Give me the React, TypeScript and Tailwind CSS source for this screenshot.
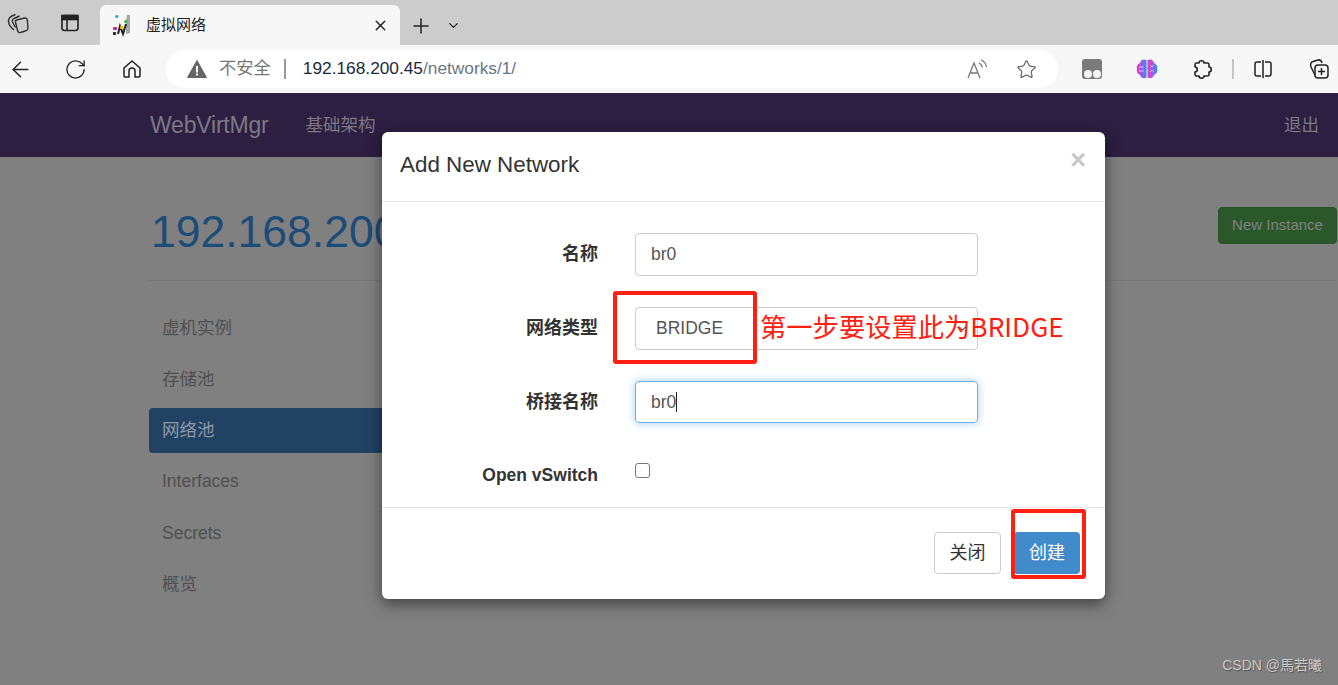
import { ArrowLeft, RotateCw, Star, Plus, X, ChevronDown } from "lucide-react";

const SIDE_ITEMS = [
  { label: "虚机实例", active: false },
  { label: "存储池", active: false },
  { label: "网络池", active: true },
  { label: "Interfaces", active: false },
  { label: "Secrets", active: false },
  { label: "概览", active: false },
];

const FONT = "font-['Liberation_Sans','Noto_Sans_CJK_SC',sans-serif]";

function Favicon() {
  return (
    <svg width="22" height="24" viewBox="0 0 22 24">
      <path d="M15 2 L18 2 L18 20 L14 21 L14 8 Z" fill="#a8a8a8" />
      <rect x="3" y="2" width="3.500" height="3" rx="1.500" fill="#35a7e0" />
      <rect x="12" y="7" width="4" height="3" rx="1.500" fill="#3cc04a" />
      <path d="M6 21 L8 13 L11 21 L14 11" stroke="#222" strokeWidth="2" fill="none" />
      <rect x="1" y="14" width="4" height="3" rx="1" fill="#d0208a" />
      <rect x="8" y="13" width="3.500" height="3" rx="1" fill="#f2c200" />
      <rect x="1" y="19" width="3" height="3" fill="#333" />
    </svg>
  );
}

function BrowserChrome() {
  return (
    <div className="h-[93px] flex flex-col">
      {/* tab strip */}
      <div className="h-[45px] bg-[#cccccc] flex items-end">
        <div className="w-[100px] h-[45px] flex items-center text-[#222]">
          <svg className="ml-[7px]" width="22" height="22" viewBox="0 0 22 22" fill="none" stroke="#333" strokeWidth="1.400">
            <path d="M9.500 8 L17.500 6 C19 5.700 20 6.500 20.300 8 L21 16 C21 17.500 20.300 18.500 19 18.800 L13.500 20.500 C12 21 10.800 20 10.500 18.500 L8.500 10 C8.200 9 8.500 8.300 9.500 8 Z" />
            <path d="M8.500 15.500 L5.500 10 C5 8.500 5.500 7.300 7 6.500 L12.500 4" />
            <path d="M7 18 C3 15 1.500 12 1.500 9 C1.500 6.500 3 5 5 4 L8.500 2.500" />
          </svg>
          <svg className="ml-[31px]" width="20" height="20" viewBox="0 0 20 20" fill="none" stroke="#222" strokeWidth="1.600">
            <rect x="2" y="2.500" width="16" height="15" rx="2.500" />
            <rect x="2" y="2.500" width="16" height="4" fill="#222" />
            <path d="M7 6.500 V17.500" />
          </svg>
        </div>
        <div className="w-[300px] h-[40px] bg-[#f7f7f7] rounded-t-[6px] flex items-center pl-[12px] pr-[11px]">
          <Favicon />
          <span className={`ml-[12px] text-[15px] text-[#222] flex-1 ${FONT}`}>虚拟网络</span>
          <X size={17} strokeWidth={2} className="text-[#222]" />
        </div>
        <div className="h-[45px] flex items-center ml-[9px] pt-[6px]">
          <Plus size={24} strokeWidth={1.5} className="text-[#222]" />
          <ChevronDown size={15} strokeWidth={2} className="ml-[13px] text-[#222]" />
        </div>
      </div>
      {/* toolbar */}
      <div className="h-[48px] bg-[#f7f7f7] flex items-center">
        <ArrowLeft size={25} strokeWidth={1.4} className="ml-[8px] text-[#222]" />
        <RotateCw size={23} strokeWidth={1.4} className="ml-[31px] text-[#222]" />
        <svg className="ml-[34px]" width="22" height="22" viewBox="0 0 22 22" fill="none" stroke="#222" strokeWidth="1.500">
          <path d="M3 10 L11 3 L19 10 V18 a1 1 0 0 1 -1 1 H14 V13 a3 3 0 0 0 -6 0 V19 H4 a1 1 0 0 1 -1 -1 Z" />
        </svg>
        <div className={`ml-[23px] w-[892px] h-[38px] bg-white rounded-full flex items-center pl-[21px] pr-[21px] text-[17.300px] ${FONT}`}>
          <svg className="flex-none" width="20" height="20" viewBox="0 0 20 20">
            <path d="M10 1.500 L19.500 18.500 H0.500 Z" fill="#666" stroke="#666" strokeLinejoin="round" />
            <rect x="9" y="7" width="2" height="6.500" fill="#fff" />
            <rect x="9" y="14.500" width="2" height="2" fill="#fff" />
          </svg>
          <span className="ml-[12px] text-[#777]">不安全</span>
          <span className="ml-[13px] w-[2px] h-[20px] bg-[#999]" />
          <span className="ml-[17px] text-[#1a2a3a]">192.168.200.45</span>
          <span className="text-[#6b7785]">/networks/1/</span>
          <div className="flex-1" />
          <svg width="22" height="22" viewBox="0 0 22 22" fill="none" stroke="#777" strokeWidth="1.300">
            <path d="M2 20 L8 5 L14 20 M4.500 15 H11.500" />
            <path d="M13 5 C15 6 16 7.500 16.500 9.500 M15 2 C18 3 20 6 20.500 9" />
          </svg>
          <Star size={21} strokeWidth={1.4} className="ml-[28px] text-[#666]" />
        </div>
        <div className="ml-[24px] w-[20px] h-[20px] rounded-[3px] bg-[#7b7b7b] flex items-end justify-center gap-[1px] pb-[1px]">
          <span className="w-[8px] h-[8px] rounded-full bg-[#f7f7f7]" />
          <span className="w-[8px] h-[8px] rounded-full bg-[#f7f7f7]" />
        </div>
        <svg className="ml-[34px]" width="22" height="22" viewBox="0 0 22 22">
          <defs>
            <linearGradient id="brainFill" x1="0" x2="1" y1="0" y2="0">
              <stop offset="0" stopColor="#f03bb0" />
              <stop offset="0.5" stopColor="#9b5cf0" />
              <stop offset="1" stopColor="#2f8cf5" />
            </linearGradient>
          </defs>
          <path d="M10.500 2 C7 0.500 4.500 2 4 5 C1.500 6 0 9 1 11 C0 14 2 16 4 17 C5 20.500 8.500 21 10.500 19.500 Z" fill="url(#brainFill)" />
          <path d="M11.500 2 C15 0.500 17.500 2 18 5 C20.500 6 22 9 21 11 C22 14 20 16 18 17 C17 20.500 13.500 21 11.500 19.500 Z" fill="url(#brainFill)" />
          <path d="M3 9 H8 M3 13 H8 M14 7 L16 9 L18 7 M14 14 L16 12 L18 14" stroke="#fff" strokeWidth="1" opacity="0.6" fill="none" />
        </svg>
        <svg className="ml-[33px]" width="22" height="22" viewBox="0 0 22 22" fill="none" stroke="#222" strokeWidth="1.600" strokeLinejoin="round">
          <path d="M8 5 C8 2 13 2 13 5 L17 5 C18 5 18 6 18 7 L18 9 C21 9 21 14 18 14 L18 17 C18 18 17 18 16 18 L13 18 C13 21 8 21 8 18 L5 18 C4 18 4 17 4 16 L4 14 C7 14 7 9 4 9 L4 7 C4 6 4 5 5 5 Z" />
        </svg>
        <span className="ml-[19px] w-[2px] h-[20px] bg-[#c4c4c4]" />
        <svg className="ml-[18px]" width="22" height="22" viewBox="0 0 22 22" fill="none" stroke="#222" strokeWidth="1.500">
          <path d="M9 4 H5 a2 2 0 0 0 -2 2 V16 a2 2 0 0 0 2 2 H9 M13 4 H17 a2 2 0 0 1 2 2 V16 a2 2 0 0 1 -2 2 H13 M11 2 V20" />
        </svg>
        <svg className="ml-[34px]" width="22" height="22" viewBox="0 0 22 22" fill="none" stroke="#222" strokeWidth="1.500">
          <path d="M7 17 L3 9 C2 6 3 4 5 3.500 L10 2 C12 1.500 13.500 3 14 5" />
          <rect x="7" y="7" width="13" height="13" rx="3" />
          <path d="M13.500 10 V17 M10 13.500 H17" />
        </svg>
      </div>
    </div>
  );
}

function Field({ label, children }: { label: string; children: React.ReactNode }) {
  return (
    <div className="flex items-center h-[42px]">
      <label className="w-[216px] text-right text-[18px] font-bold text-[#333]">{label}</label>
      <div className="ml-[37px]">{children}</div>
    </div>
  );
}

function TextBox({ value, focused }: { value: string; focused?: boolean }) {
  return (
    <div
      className={`w-[343px] rounded-[4px] border flex items-center pl-[15px] text-[17.500px] text-[#555] ${
        focused ? "h-[42px] border-[#66afe9] shadow-[0_0_8px_rgba(102,175,233,0.6)]" : "h-[43px] border-[#cccccc]"
      }`}
    >
      {value}
      {focused && <span className="w-px h-[20px] bg-[#222]" />}
    </div>
  );
}

export default function App() {
  return (
    <div className={`relative w-[1338px] h-[685px] overflow-hidden bg-[#808080] ${FONT}`}>
      <BrowserChrome />

      {/* app navbar */}
      <div className="h-[64px] bg-[#2c1f42] flex items-center pl-[150px] pr-[19px]">
        <span className="text-[23px] text-[#7d7884] leading-none tracking-[-0.2px]">WebVirtMgr</span>
        <span className="ml-[37px] text-[17.500px] text-[#7d7884]">基础架构</span>
        <div className="flex-1" />
        <span className="text-[17.500px] text-[#7d7884]">退出</span>
      </div>

      {/* page body */}
      <div className="pl-[149px] pr-[1px]">
        <div className="h-[124px] border-b border-[#767676] flex items-start justify-between">
          <h1 className="mt-[47px] ml-[2px] text-[44.500px] leading-[56px] text-[#1c4c78]">192.168.200.45</h1>
          <button className="mt-[50px] w-[119px] h-[37px] rounded-[4px] bg-[#2b582b] text-[15px] text-[#808080] border border-[#285228]">
            New Instance
          </button>
        </div>
        <ul className="mt-[24.500px] w-[240px] flex flex-col gap-[6.200px]">
          {SIDE_ITEMS.map((item) => (
            <li
              key={item.label}
              className={`h-[45px] rounded-[4px] pl-[13px] flex items-center text-[17.500px] ${
                item.active ? "bg-[#214263] text-[#8c99a8]" : "text-[#505050]"
              }`}
            >
              {item.label}
            </li>
          ))}
        </ul>
      </div>

      <div className="absolute bottom-[9px] right-[16px] text-[14px] text-[#c8c8c8] [text-shadow:1px_1px_1px_#555]">CSDN @馬若曦</div>

      {/* modal */}
      <div className="absolute left-[382px] top-[132px] w-[723px] h-[467px] bg-white rounded-[6px] shadow-[0_5px_15px_rgba(0,0,0,0.5)] flex flex-col">
        <div className="h-[70px] border-b border-[#e5e5e5] flex items-start justify-between pl-[18px] pr-[19px]">
          <h4 className="mt-[18px] text-[22.400px] leading-[30px] text-[#333]">Add New Network</h4>
          <span className="mt-[14px] text-[27px] leading-[28px] font-bold text-[#c8c8c8]">×</span>
        </div>
        <div className="flex-1 flex flex-col pt-[31px]">
          <Field label="名称">
            <TextBox value="br0" />
          </Field>
          <div className="h-[32px]" />
          <Field label="网络类型">
            <div className="w-[343px] h-[43px] rounded-[4px] border border-[#cccccc] flex items-center justify-between pl-[20px] pr-[8px] text-[17.500px] text-[#555]">
              BRIDGE
              <ChevronDown size={13} strokeWidth={2} className="text-[#555]" />
            </div>
          </Field>
          <div className="h-[32px]" />
          <Field label="桥接名称">
            <TextBox value="br0" focused />
          </Field>
          <div className="h-[31px]" />
          <div className="flex items-start h-[42px]">
            <label className="w-[216px] mt-[8px] text-right text-[17.500px] font-bold text-[#333]">Open vSwitch</label>
            <div className="ml-[37px] mt-[9px] w-[15px] h-[15px] rounded-[3px] border border-[#767676] bg-white" />
          </div>
        </div>
        <div className="h-[92px] border-t border-[#e5e5e5] flex items-start justify-end pt-[24px] pr-[25px] gap-[13px]">
          <button className="w-[67px] h-[42px] rounded-[4px] border border-[#cccccc] bg-white text-[18px] text-[#333]">关闭</button>
          <button className="w-[66px] h-[42px] rounded-[4px] bg-[#428bca] text-[18px] text-white">创建</button>
        </div>
      </div>

      {/* red annotations */}
      <div className="absolute left-[613px] top-[291px] w-[144px] h-[73px] border-4 border-[#ff2011] rounded-[3px]" />
      <div className="absolute left-[1011px] top-[509px] w-[75px] h-[70px] border-4 border-[#ff2011] rounded-[3px]" />
      <div className="absolute left-[760px] top-[307px] text-[26.300px] leading-[38px] text-[#ff2011] whitespace-nowrap font-['Noto_Sans_CJK_SC','Noto_Sans',sans-serif]">
        第一步要设置此为BRIDGE
      </div>
    </div>
  );
}
